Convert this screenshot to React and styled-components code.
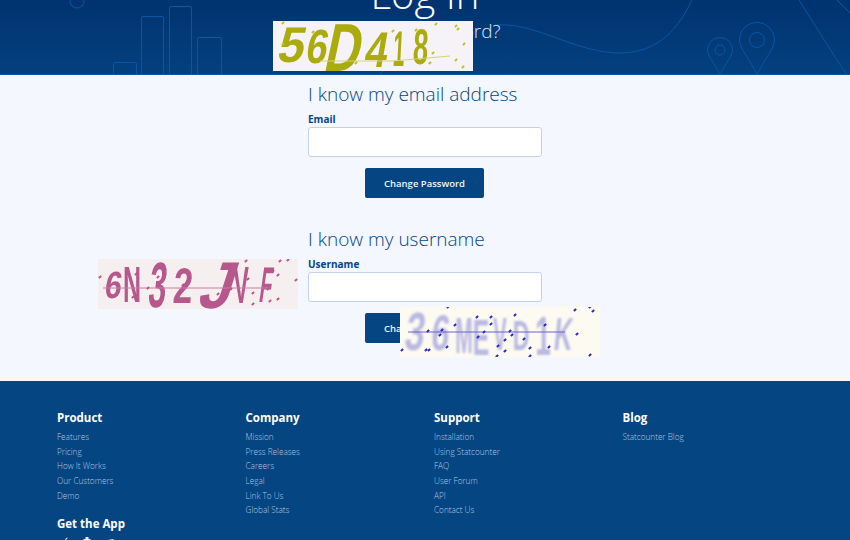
import React from "react";
import styled, { createGlobalStyle } from "styled-components";

const Global = createGlobalStyle`
  html, body { margin: 0; padding: 0; background: #f4f7fd; }
  body { width: 850px; height: 540px; overflow: hidden; font-family: "Open Sans", "Noto Sans", sans-serif; }
  * { box-sizing: border-box; }
`;
const Page = styled.div`position: relative; width: 850px; height: 540px; overflow: hidden;`;
const Hero = styled.header`
  position: relative; height: 75px; overflow: hidden; text-align: center; color: #fff;
  background: linear-gradient(180deg, #003370 0%, #04407f 100%);
  border-bottom: 1px solid #0a5aa8;
`;
const HeroArt = styled.svg`position: absolute; inset: 0; width: 850px; height: 75px;`;
const HeroTitle = styled.h1`
  position: relative; margin: -28px 0 0; font-size: 40px; line-height: 44px; font-weight: 300;
`;
const HeroSub = styled.p`
  position: relative; margin: 1px 0 0; font-size: 19px; line-height: 28px; font-weight: 300; color: #dce8f6;
`;
const Main = styled.main`
  height: 306px; background: #f4f7fd; display: flex; flex-direction: column; align-items: center; padding-top: 6px;
`;
const Form = styled.form`width: 234px; display: flex; flex-direction: column; margin-bottom: 28px;`;
const Heading = styled.h2`margin: 0 0 5px; font-size: 19px; line-height: 26px; font-weight: 300; color: #044587; white-space: nowrap;`;
const Label = styled.label`font-size: 10px; line-height: 14px; font-weight: 700; color: #044587; margin-bottom: 1px;`;
const Input = styled.input`
  width: 234px; height: 30px; border: 1px solid #c3d2ea; border-radius: 3px; background: #fff; display: block;
`;
const Submit = styled.button`
  align-self: center; width: 119px; height: 30px; margin: 11px 1px 0 0; border: 0; border-radius: 2px;
  background: #044582; color: #f1f5fa; font: 600 9.5px "Open Sans", sans-serif;
`;
const Footer = styled.footer`
  height: 159px; background: #044582; padding: 29px 57px 0; display: grid;
  grid-template-columns: repeat(4, 188.5px); overflow: hidden;
`;
const FootCol = styled.div`display: flex; flex-direction: column; align-items: flex-start;`;
const FootTitle = styled.h3`
  margin: 0 0 5px; font-size: 11.5px; line-height: 15px; font-weight: 700; color: #fff;
`;
const AppTitle = styled(FootTitle)`margin-top: 13px; margin-bottom: 6px;`;
const FootLink = styled.a`font-size: 8.2px; line-height: 14.65px; font-weight: 300; color: #b4c8e0; white-space: nowrap;`;
const AppIcons = styled.div`display: flex; gap: 12px; height: 12px; padding-left: 3px;`;
const Captcha = styled.svg`
  position: absolute; width: 200px; height: 50px; left: ${p => p.$x}px; top: ${p => p.$y}px;
`;

const CaptchaImage = ({ x, y, bg, color, line, chars, dots, id, fill, blur }) => (
  <Captcha $x={x} $y={y} viewBox="0 0 200 50">
    <defs><filter id={id}><feGaussianBlur stdDeviation={blur} /></filter></defs>
    <rect width="200" height="50" fill={bg} />
    <g filter={`url(#${id})`} fill={color} fontFamily="'Liberation Sans', sans-serif" fontWeight="700">
      {chars.map(([c, cx, cy, size, sx, skew], i) => (
        <text key={i} transform={`translate(${cx} ${cy}) skewX(${skew}) scale(${sx} 1)`} fontSize={size} textAnchor="middle">{c}</text>
      ))}
    </g>
    <path d={line.d} stroke={line.c} strokeWidth="1.2" fill="none" />
    {dots.map(([dx, dy], i) => (
      <rect key={i} x={dx - 1.5} y={dy - 1} width="3" height="2" fill={fill} transform={`rotate(-40 ${dx} ${dy})`} />
    ))}
  </Captcha>
);

const cols = [
  ["Product", ["Features", "Pricing", "How It Works", "Our Customers", "Demo"]],
  ["Company", ["Mission", "Press Releases", "Careers", "Legal", "Link To Us", "Global Stats"]],
  ["Support", ["Installation", "Using Statcounter", "FAQ", "User Forum", "API", "Contact Us"]],
  ["Blog", ["Statcounter Blog"]],
];

const pin = (x, tip, r, hole) => {
  const cy = tip - r * 2;
  return (
    <g key={x}>
      <path d={`M${x} ${tip}C${x - r * 0.4} ${tip - r * 0.9} ${x - r} ${cy + r * 0.5} ${x - r} ${cy}A${r} ${r} 0 0 1 ${x + r} ${cy}C${x + r} ${cy + r * 0.5} ${x + r * 0.4} ${tip - r * 0.9} ${x} ${tip}Z`} />
      <circle cx={x} cy={cy} r={hole} />
    </g>
  );
};

export default function App() {
  return (
    <Page>
      <Global />
      <Hero>
        <HeroArt viewBox="0 0 850 75" fill="none" stroke="#0a56a4" strokeWidth="1">
          <circle cx="77" cy="1" r="7" />
          <path d="M113.5 75V64a1.500 1.500 0 0 1 1.500-1.500h20a1.500 1.500 0 0 1 1.500 1.500V75" />
          <path d="M141.500 75V18a1.500 1.500 0 0 1 1.500-1.500h19a1.500 1.500 0 0 1 1.500 1.500V75" />
          <path d="M169.500 75V8a1.500 1.500 0 0 1 1.500-1.500h19a1.500 1.500 0 0 1 1.500 1.500V75" />
          <path d="M197.500 75V39a1.500 1.500 0 0 1 1.500-1.500h21a1.500 1.500 0 0 1 1.500 1.500V75" />
          <path d="M378 75L395 62" />
          <path d="M495 25C535 22 570 50 615 53C660 55 680 25 692 0" />
          {pin(720, 75, 12.500, 5)}
          {pin(757, 75, 17.500, 7.500)}
          <path d="M799 0C815 25 830 50 847 75M837 0L850 13" />
        </HeroArt>
        <HeroTitle>Log In</HeroTitle>
        <HeroSub>Forgot password?</HeroSub>
      </Hero>
      <Main>
        <Form>
          <Heading>I know my email address</Heading>
          <Label>Email</Label>
          <Input type="text" />
          <Submit type="button">Change Password</Submit>
        </Form>
        <Form>
          <Heading>I know my username</Heading>
          <Label>Username</Label>
          <Input type="text" />
          <Submit type="button">Change Password</Submit>
        </Form>
      </Main>
      <Footer>
        {cols.map(([title, links], i) => (
          <FootCol key={title}>
            <FootTitle>{title}</FootTitle>
            {links.map(l => <FootLink key={l}>{l}</FootLink>)}
            {i === 0 && (
              <>
                <AppTitle>Get the App</AppTitle>
                <AppIcons>
                  <svg width="10" height="12" viewBox="0 0 10 12" fill="#e8eef6"><path d="M5 3C5.500 1.500 6.500 .8 7.500 .5 7.500 1.800 6.500 3 5 3ZM2.500 3.500C3.500 3.200 4.300 3.800 5 3.800S6.700 3.200 7.800 3.500C9 4 9.500 5 9.500 6.500 9.500 9 8 12 5 12S.5 9 .5 6.500C.5 5 1.200 4 2.500 3.500Z" /></svg>
                  <svg width="10" height="12" viewBox="0 0 10 12" fill="#e8eef6"><path d="M3.500 0h3v2h2v10h-7V2h2Z" /></svg>
                  <svg width="10" height="12" viewBox="0 0 10 12" fill="#e8eef6"><path d="M.5 3.500 4.500 2.800V6H.5ZM5.200 2.700 9.500 2V6H5.200Z" /></svg>
                </AppIcons>
              </>
            )}
          </FootCol>
        ))}
      </Footer>
      <CaptchaImage id="c1" x={273} y={21} bg="#f6f3f8" color="#abab0e" fill="#c0c020" blur="0.6"
        line={{ d: "M47 40H120L177 35", c: "#d2d27a" }}
        chars={[["5",16,41,50,.95,-12],["6",42,42,48,.8,-10],["D",67,50,68,.72,-12],["4",101,46,50,.8,-10],["1",125,45,50,.42,-3],["8",147,43,50,.55,-3]]}
        dots={[[10,2],[40,11],[10,23],[83,42],[120,10],[143,9],[163,3],[183,5],[185,8],[160,32],[157,42],[183,39],[191,23],[190,46]]} />
      <CaptchaImage id="c2" x={98} y={259} bg="#f5efef" color="#b7588d" fill="#b7558a" blur="0.7"
        line={{ d: "M5 29H172", c: "#cc7aa6" }}
        chars={[["6",14,39,38,.8,-8],["N",34,43,50,.5,0],["3",58,48,64,.5,-6],["2",84,44,50,.7,-4],["J",114,49,66,.9,-18],["V",143,44,52,.45,0],["F",166,43,50,.4,-8]]}
        dots={[[2,18],[38,15],[35,38],[50,29],[60,18],[85,26],[120,35],[133,30],[150,20],[148,2],[155,34],[170,30],[155,45],[172,42],[180,40],[175,12],[180,16],[182,2],[190,1],[198,21]]} />
      <CaptchaImage id="c3" x={400} y={307} bg="#fdfaf2" color="#b9b9e2" fill="#2f24c8" blur="0.9"
        line={{ d: "M8 25H165", c: "#6a62c8" }}
        chars={[["3",13,43,54,.65,-8],["6",39,43,50,.65,-6],["M",64,46,50,.42,0],["E",81,48,50,.5,0],["V",100,43,46,.45,0],["D",121,43,42,.55,0],["1",143,48,56,.5,0],["K",162,43,46,.55,-6]]}
        dots={[[2,43],[28,24],[48,0],[55,18],[47,40],[42,23],[40,28],[26,43],[29,43],[77,10],[84,25],[78,30],[91,10],[91,17],[98,39],[105,44],[97,49],[115,8],[110,24],[112,28],[105,33],[124,32],[130,41],[130,49],[145,18],[149,40],[175,3],[177,27],[190,0],[193,4],[190,48]]} />
    </Page>
  );
}
